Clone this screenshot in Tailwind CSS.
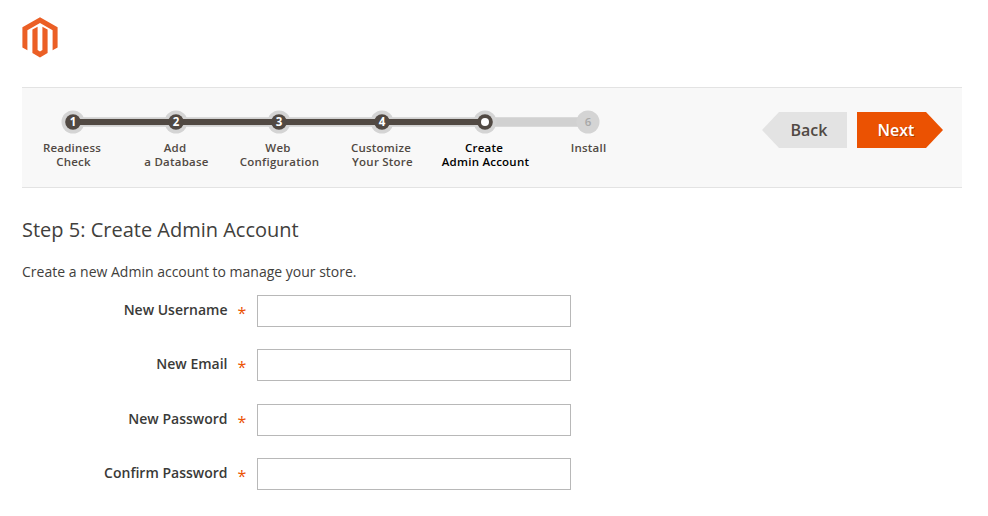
<!DOCTYPE html>
<html lang="en">
<head>
<meta charset="utf-8">
<title>Create Admin Account</title>
<script src="https://cdn.jsdelivr.net/npm/@tailwindcss/browser@4"></script>
</head>
<body class="bg-white font-['Open_Sans','Noto_Sans',sans-serif] text-[#41403c]">
<div class="w-[988px] h-[516px] overflow-hidden pl-[22px] pr-[26px]">
  <header class="h-[87px] pt-[17px]">
    <svg class="block" width="36" height="41" viewBox="0 0 36 41" fill="#eb5f25">
      <path d="M18 .2 35.6 10.3V30.500L30.600 33.300V13.200L18 5.900 5.400 13.200V33.300L.4 30.500V10.300Z"/>
      <path d="M10.400 15.500V12.500L15.600 9.800V33L18 34.400 20.400 33V9.800L25.600 12.500V36L18 40.400 10.400 36Z"/>
    </svg>
  </header>
  <nav class="flex h-[101px] bg-[#f8f8f8] border-y border-[#e3e3e3]">
    <div class="w-[618px] pt-[21px]">
      <svg class="block" width="618" height="27" viewBox="0 0 618 27">
        <path d="M51 13.100H566" stroke="#d1d1d1" stroke-width="9.500"/>
        <g fill="#d4d4d4"><circle cx="51" cy="13" r="11.500"/><circle cx="154" cy="13" r="11.500"/><circle cx="257" cy="13" r="11.500"/><circle cx="360" cy="13" r="11.500"/><circle cx="463" cy="13" r="11.500"/><circle cx="566" cy="13" r="11.500"/></g>
        <path d="M51 13H463" stroke="#514943" stroke-width="6"/>
        <g fill="#514943"><circle cx="51" cy="13" r="7.800"/><circle cx="154" cy="13" r="7.800"/><circle cx="257" cy="13" r="7.800"/><circle cx="360" cy="13" r="7.800"/><circle cx="463" cy="13" r="7.800"/></g>
        <circle cx="463" cy="13" r="4" fill="#fff"/>
        <g class="text-[11.500px] font-bold" fill="#fff" text-anchor="middle"><text x="51" y="17.400">1</text><text x="154" y="17.400">2</text><text x="257" y="17.400">3</text><text x="360" y="17.400">4</text><text x="566" y="17.400" fill="#a8a8a8" font-weight="600">6</text></g>
      </svg>
      <ol class="flex text-center text-[11.500px] tracking-[0.230px] leading-[14.400px] font-semibold text-[#514943] pt-[5px]">
        <li class="w-[103px]"><span class="block pr-[3px]">Readiness</span>Check</li>
        <li class="w-[103px]"><span class="block pr-[3px]">Add</span>a Database</li>
        <li class="w-[103px]"><span class="block pr-[3px]">Web</span>Configuration</li>
        <li class="w-[103px]"><span class="block pr-[3px]">Customize</span>Your Store</li>
        <li class="w-[103px] text-black"><span class="block pr-[3px]">Create</span>Admin Account</li>
        <li class="w-[103px]">Install</li>
      </ol>
    </div>
    <div class="flex ml-auto mr-[19px] pt-[24px] gap-[10px] text-[16px] leading-[36px] font-semibold">
      <button class="w-[85px] h-[36px] pl-[9px] bg-[#e3e3e3] text-[#514943] [clip-path:polygon(17px_0,100%_0,100%_100%,17px_100%,0_50%)]">Back</button>
      <button class="w-[86px] h-[36px] pr-[8px] bg-[#eb5202] text-white [text-shadow:1px_1px_0_#00000040] [clip-path:polygon(0_0,69px_0,100%_50%,69px_100%,0_100%)]">Next</button>
    </div>
  </nav>
  <main class="pt-[28px]">
    <h1 class="text-[20px] leading-[28px]">Step 5: Create Admin Account</h1>
    <p class="mt-[18px] text-[14px] leading-[20px]">Create a new Admin account to manage your store.</p>
    <form class="mt-[13px] flex flex-col gap-[22.400px] text-[14px] text-[#3a3a38]">
      <div class="flex h-[32px]"><label for="u" class="w-[205.500px] text-right leading-[30px] font-semibold">New Username</label><span class="w-[29px] pl-[10px] leading-[37px] text-[16px] text-[#eb5202]">*</span><input id="u" class="w-[314px] h-[32px] border border-[#b8b8b8]"></div>
      <div class="flex h-[32px]"><label for="e" class="w-[205.500px] text-right leading-[30px] font-semibold">New Email</label><span class="w-[29px] pl-[10px] leading-[37px] text-[16px] text-[#eb5202]">*</span><input id="e" class="w-[314px] h-[32px] border border-[#b8b8b8]"></div>
      <div class="flex h-[32px]"><label for="p" class="w-[205.500px] text-right leading-[30px] font-semibold">New Password</label><span class="w-[29px] pl-[10px] leading-[37px] text-[16px] text-[#eb5202]">*</span><input id="p" type="password" class="w-[314px] h-[32px] border border-[#b8b8b8]"></div>
      <div class="flex h-[32px]"><label for="c" class="w-[205.500px] text-right leading-[30px] font-semibold">Confirm Password</label><span class="w-[29px] pl-[10px] leading-[37px] text-[16px] text-[#eb5202]">*</span><input id="c" type="password" class="w-[314px] h-[32px] border border-[#b8b8b8]"></div>
    </form>
  </main>
</div>
</body>
</html>
